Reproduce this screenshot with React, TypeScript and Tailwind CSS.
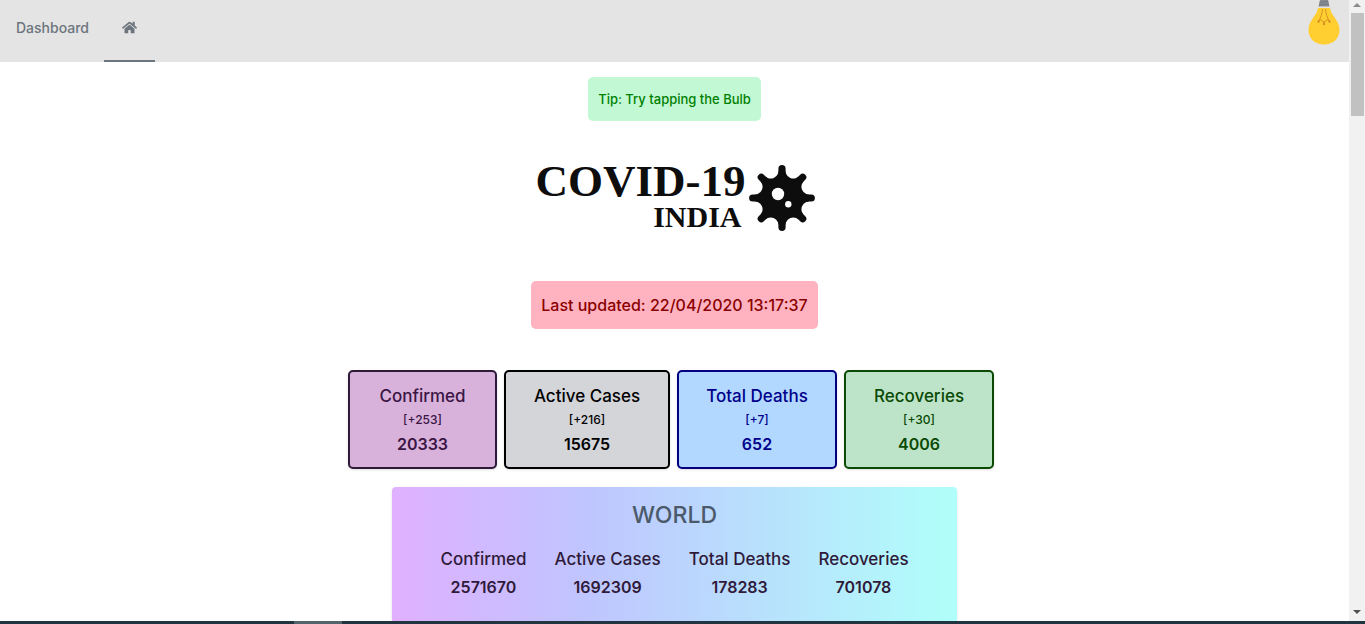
import { FaHome } from "react-icons/fa";

type Stat = { label: string; delta?: string; value: string; tone?: string };

const india: Stat[] = [
  { label: "Confirmed", delta: "[+253]", value: "20333", tone: "w-[149px] border-[#2f1a3a] bg-[#d8b2da] text-[#3a1545]" },
  { label: "Active Cases", delta: "[+216]", value: "15675", tone: "w-[166px] border-black bg-[#d4d5d9] text-black" },
  { label: "Total Deaths", delta: "[+7]", value: "652", tone: "w-[160px] border-[#000080] bg-[#b2d8ff] text-[#00008b]" },
  { label: "Recoveries", delta: "[+30]", value: "4006", tone: "w-[150px] border-[#0b4a05] bg-[#bde4c8] text-[#0b4a05]" },
];

const world: Stat[] = [
  { label: "Confirmed", value: "2571670" },
  { label: "Active Cases", value: "1692309" },
  { label: "Total Deaths", value: "178283" },
  { label: "Recoveries", value: "701078" },
];

const spikes = [0, 45, 90, 135, 180, 225, 270, 315];

function Virus() {
  return (
    <svg viewBox="-34 -34 68 68" className="h-[68px] w-[68px]" aria-hidden="true">
      <mask id="virus-body" maskUnits="userSpaceOnUse" x="-34" y="-34" width="68" height="68">
        <rect x="-34" y="-34" width="68" height="68" fill="white" />
        {spikes.map((a) => (
          <circle key={a} cx="0" cy="-29.5" r="7.8" fill="black" transform={`rotate(${a + 22.5})`} />
        ))}
      </mask>
      <circle r="27" fill="#0d0d0d" mask="url(#virus-body)" />
      {spikes.map((a) => (
        <line key={a} y1="-20" y2="-29.3" stroke="#0d0d0d" strokeWidth="7.2" strokeLinecap="round" transform={`rotate(${a})`} />
      ))}
      <circle cx="-4" cy="-4" r="6.2" fill="white" />
      <circle cx="6.3" cy="6.3" r="3.2" fill="white" />
    </svg>
  );
}

function Bulb() {
  return (
    <svg viewBox="0 0 32 45" className="h-[45px] w-8" aria-hidden="true">
      <path d="M12 0H20L21.500 6.500H10.500Z" fill="#858b91" />
      <path d="M11.500 2.500 20.500 1.500M11 5 21 4" stroke="#6f767d" strokeWidth=".8" />
      <path d="M10 8H22C23 16 31.500 20 31.500 30C31.500 39 24.500 44.500 16 44.500S.5 39 .5 30C.5 20 9 16 10 8Z" fill="#ffce31" />
      <path d="M14.500 9C14 14 13 17 11 20.500M17.500 9C18 14 19 17 21 20.500M10.500 21.500 13 19.500 16 23 19 19.500 21.500 21.500M16 21V24.500" fill="none" stroke="#d6931f" strokeWidth="1" />
      <circle cx="10.500" cy="21.500" r="1.200" fill="#d98e20" />
      <circle cx="16" cy="24" r="1.200" fill="#d98e20" />
      <circle cx="21.500" cy="21.500" r="1.200" fill="#d98e20" />
    </svg>
  );
}

export default function App() {
  return (
    <div className="flex h-screen flex-col overflow-hidden bg-white font-['Inter','Liberation_Sans',sans-serif] font-medium">
      <div className="flex min-h-0 flex-1">
        <div className="min-w-0 flex-1 overflow-hidden">
          <nav className="flex h-[62px] items-start justify-between bg-[#e4e4e4] text-[#6c757d]">
            <div className="flex h-full text-sm">
              <a href="#dashboard" className="pt-[18px] pr-[15px] pl-4 leading-5">Dashboard</a>
              <a href="#home" aria-label="Home" className="flex h-full w-[51px] justify-center border-b-2 border-[#6c757d] pt-5">
                <FaHome size={15} />
              </a>
            </div>
            <button type="button" aria-label="Toggle theme" className="mr-[9px]">
              <Bulb />
            </button>
          </nav>

          <main className="flex flex-col items-center">
            <p className="mt-[15px] rounded-[5px] bg-[#c3f8d4] px-[10px] py-3 text-[13px] leading-5 text-[#008000]">Tip: Try tapping the Bulb</p>

            <h1 className="mt-10 ml-0.5 flex items-center gap-0.5 font-['Liberation_Serif',serif] font-bold text-[#0d0d0d]">
              <span className="flex flex-col items-end pt-0.5">
                <span className="text-[45px] leading-9">COVID-19</span>
                <span className="pr-1 text-[30px] leading-9">INDIA</span>
              </span>
              <Virus />
            </h1>

            <p className="mt-[46px] rounded-[5px] bg-[#ffb3c1] px-[10px] py-3 text-base leading-6 text-[#8b0000]">Last updated: 22/04/2020 13:17:37</p>

            <section aria-label="India" className="mt-[41px] flex">
              {india.map((s) => (
                <div key={s.label} className={`mr-[7px] h-[99px] rounded-[5px] border-2 pt-3 text-center shadow ${s.tone}`}>
                  <h2 className="text-[17px] leading-6">{s.label}</h2>
                  <p className="text-xs leading-6">{s.delta}</p>
                  <p className="text-base font-semibold leading-6">{s.value}</p>
                </div>
              ))}
            </section>

            <section aria-labelledby="world" className="mt-[18px] w-[565px] rounded-[4px] bg-[linear-gradient(to_right,#e0b0ff,#c0c4ff_33%,#b0fffa)] pt-3 pb-6 text-center shadow">
              <h2 id="world" className="text-[23px] leading-8 text-[#4b5a6b]">WORLD</h2>
              <div className="mt-4 flex justify-center gap-7 text-[17px] leading-6 text-[#2f1a3a]">
                {world.map((s) => (
                  <div key={s.label}>
                    <h3>{s.label}</h3>
                    <p className="mt-1 text-base font-semibold leading-6">{s.value}</p>
                  </div>
                ))}
              </div>
            </section>
          </main>
        </div>

        <div className="flex w-4 flex-col items-center bg-[#f1f1f1]" aria-hidden="true">
          <svg viewBox="0 0 16 13" className="h-[13px] w-4"><path d="M8 3 12 7H4Z" fill="#8b8b8b" /></svg>
          <div className="h-[103px] w-[13px] bg-[#c1c1c1]" />
          <svg viewBox="0 0 16 16" className="mt-auto h-4 w-4"><path d="M4 5H12L8 9Z" fill="#505050" /></svg>
        </div>
      </div>
      <div className="flex h-[3px] bg-[#203540]" aria-hidden="true">
        <div className="ml-[294px] w-12 bg-[#526369]" />
      </div>
    </div>
  );
}
